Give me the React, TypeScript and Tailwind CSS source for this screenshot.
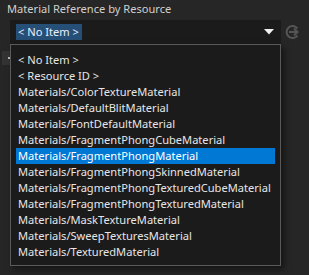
import React from "react";

const items = [
  "< No Item >",
  "< Resource ID >",
  "Materials/ColorTextureMaterial",
  "Materials/DefaultBlitMaterial",
  "Materials/FontDefaultMaterial",
  "Materials/FragmentPhongCubeMaterial",
  "Materials/FragmentPhongMaterial",
  "Materials/FragmentPhongSkinnedMaterial",
  "Materials/FragmentPhongTexturedCubeMaterial",
  "Materials/FragmentPhongTexturedMaterial",
  "Materials/MaskTextureMaterial",
  "Materials/SweepTexturesMaterial",
  "Materials/TexturedMaterial",
];

export default function App() {
  return (
    <div
      className="relative w-[309px] h-[275px] overflow-hidden bg-[#262626] text-[11.1px] leading-[16px] text-[#dcdcdc]"
      style={{ fontFamily: '"Noto Sans", "Open Sans", sans-serif' }}
    >
      <div className="pl-[7px] pt-[1px] h-[20px] text-[#d0d0d0]">Material Reference by Resource</div>
      <div className="flex items-center pl-[10px]">
        <div className="flex items-center w-[271px] h-[24px] bg-[#1b1b1b] pl-[6px] pr-[4px]">
          <span className="bg-[#264f78] text-[#e8f0ff] px-[2px] h-[16px] min-w-[66px]">&lt; No Item &gt;</span>
          <div className="flex-1" />
          <svg width="10" height="6" viewBox="0 0 10 6" className="mr-[3px]">
            <polygon points="0,0 10,0 5,5.5" fill="#f0f0f0" />
          </svg>
        </div>
        <svg width="16" height="16" viewBox="0 0 16 16" className="ml-[4px]">
          <path d="M12.5 4.5 A6 6 0 1 0 12.5 11.5" fill="none" stroke="#555" strokeWidth="2" />
          <path d="M4 8 H12 M9 4.5 L12.5 8 L9 11.5" fill="none" stroke="#555" strokeWidth="2" />
        </svg>
      </div>
      <div className="mt-[7px] ml-[2px] w-[9px] h-[14px] bg-[#333] flex items-center justify-end pr-[1px]">
        <div className="w-[2px] h-[2px] bg-[#bbb]" />
      </div>
      <div className="absolute left-[10px] top-[44px] w-[271px] h-[222px] bg-[#1b1b1b] border border-[#5a5a5a] shadow-[3px_3px_6px_rgba(0,0,0,0.5)] pt-[7px] pl-[5px] pr-[5px]">
        {items.map((it, i) => (
          <div
            key={it}
            className={
              "h-[16px] pl-[2px] whitespace-nowrap " +
              (i === 6 ? "bg-[#0078d4] text-white" : "text-[#e6e6e6]")
            }
          >
            {it}
          </div>
        ))}
      </div>
    </div>
  );
}
